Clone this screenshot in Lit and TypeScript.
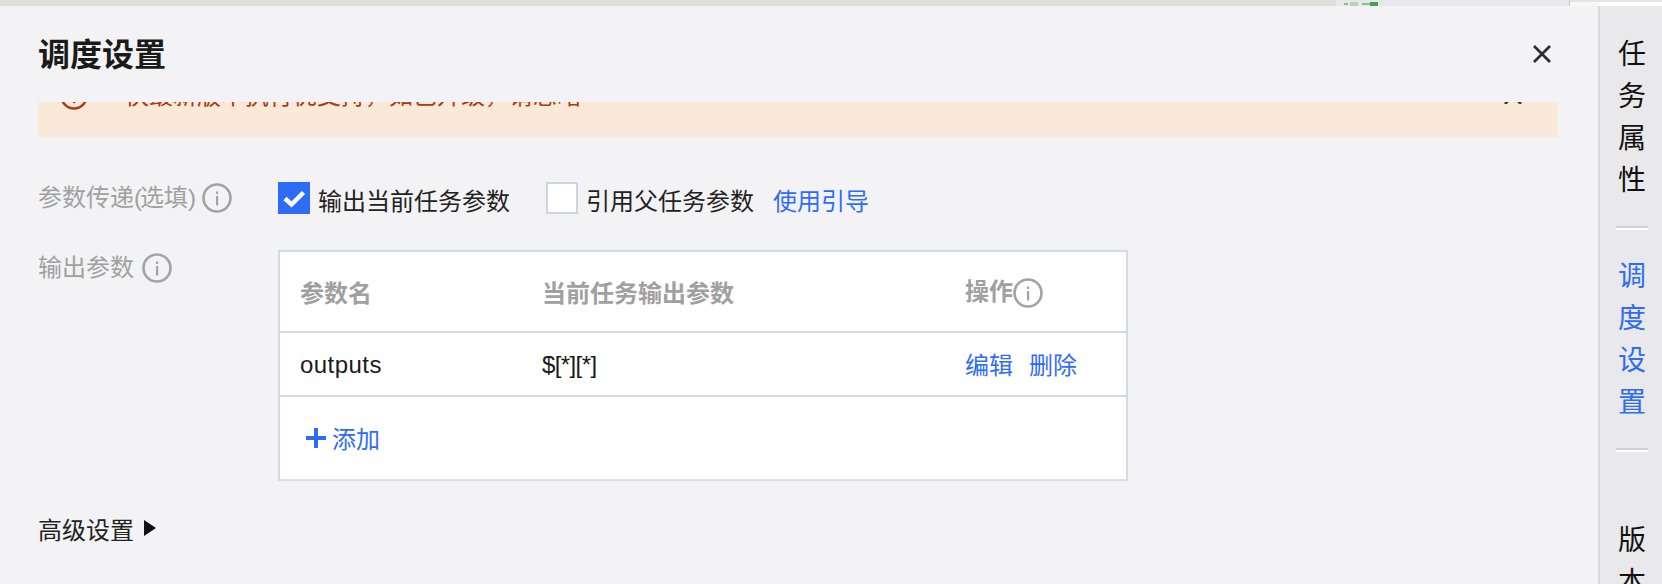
import { LitElement, html, css, svg } from "lit";
import { customElement } from "lit/decorators.js";

const info = svg`<circle cx="15" cy="15" r="13.5" fill="none" stroke="#a3a3a3" stroke-width="2.6"/><rect x="14" y="13" width="2.2" height="9.5" fill="#a3a3a3"/><rect x="14" y="8.5" width="2.2" height="2.4" fill="#a3a3a3"/>`;

@customElement("app-root")
export class AppRoot extends LitElement {
  static styles = css`
    :host {
      display: block;
      width: 1662px;
      height: 584px;
      overflow: hidden;
      background: #f3f3f5;
      font-family: "Liberation Sans", "Noto Sans CJK SC", sans-serif;
      font-size: 24px;
      color: #1a1a1a;
    }
    .strip { height: 6px; display: flex; background: #dfdfdb; }
    .strip-a { width: 1336px; }
    .strip-b { width: 234px; background: #e6e8ec; border-right: 1px solid #c4c6ca; box-sizing: border-box; overflow: hidden; }
    .strip-c { flex: 1; background: linear-gradient(90deg, #f7f7f6 28px, #fff 28px); border-top: 2px solid #e4e4e4; }
    .strip-marks { display: block; margin: 2px 0 0 8px; }
    .shell { display: flex; height: 578px; }
    .main { width: 1598px; flex: none; padding: 0 40px 0 38px; box-sizing: border-box; }
    .head { height: 96px; display: flex; align-items: center; justify-content: space-between; box-sizing: border-box; padding: 0 7px 0 0; }
    .title { font-size: 32px; font-weight: 700; line-height: 44px; margin-top: 2px; }
    .close { display: block; }
    .notice {
      height: 35px; width: 1520px; background: #fae8d8; overflow: hidden;
      color: #a93a12; line-height: 34px;
    }
    .notice-inner { display: flex; align-items: center; height: 34px; margin-top: -23px; padding-left: 22px; }
    .notice-icon { flex: none; }
    .notice-text { margin-left: 37px; flex: 1; white-space: nowrap; }
    .notice-x { flex: none; margin-right: 36px; }
    .row { display: flex; }
    .label { width: 240px; flex: none; display: flex; align-items: center; gap: 8px; color: #a0a0a0; height: 32px; }
    .label-text { margin-top: -5px; white-space: nowrap; }
    .paren { letter-spacing: -2px; }
    .params { margin-top: 45px; align-items: center; height: 32px; }
    .check { width: 32px; height: 32px; box-sizing: border-box; flex: none; }
    .check.on { background: #2f6cf6; }
    .check.off { background: #fff; border: 2px solid #cfd4df; }
    .check svg { display: block; }
    .cb-text { margin-left: 8px; margin-top: 3px; white-space: nowrap; color: #222; }
    .gap { margin-left: 36px; }
    .link { color: #2f6cf6; }
    .guide { margin-left: 19px; margin-top: 3px; }
    .out { margin-top: 36px; }
    .out .label { margin-top: 2px; }
    .table { width: 850px; height: 231px; box-sizing: border-box; background: #fff; border: 2px solid #d3d8e2; border-bottom-color: #dcdfe5; border-right-color: #d6d9e1; }
    .tr { display: grid; grid-template-columns: 242px 423px 1fr; box-sizing: border-box; padding-left: 20px; align-items: center; border-bottom: 2px solid #d3d8e2; }
    .thead { height: 81px; color: #a0a0a0; font-weight: 700; }
    .tbody { height: 64px; }
    .name { letter-spacing: 0.45px; margin-top: 2px; }
    .expr { letter-spacing: -0.6px; margin-top: 2px; }
    .th-op { display: flex; align-items: center; margin-top: -5px; }
    .th-op svg { margin-top: 8px; }
    .ops { display: flex; gap: 16px; margin-top: -1px; }
    .add { display: flex; align-items: center; height: 82px; padding-left: 26px; gap: 6px; }
    .add span { margin-top: -2px; }
    .adv { margin-top: 30px; display: flex; align-items: center; gap: 10px; color: #222; height: 34px; }
    .adv svg { margin-top: -1px; }
    .side { flex: 1; background: #e9e9eb; border-left: 2px solid #d9d9dc; box-sizing: border-box; display: flex; flex-direction: column; align-items: center; padding-top: 25px; padding-left: 2px; font-family: "Noto Sans CJK SC", sans-serif; font-size: 28px; line-height: 42px; color: #111; }
    .side-item { width: 28px; text-align: center; flex: none; }
    .side-item.active { color: #2f6cf6; }
    .sep { width: 32px; height: 4px; margin: 27px 0 23px; background: linear-gradient(#cfcfd6 50%, #fff 50%); flex: none; }
    .sep.last { margin: 27px 0 65px; }
  `;

  render() {
    return html`
      <div class="strip">
        <div class="strip-a"></div>
        <div class="strip-b">
          <svg class="strip-marks" width="40" height="4" viewBox="0 0 40 4"><rect x="0" y="1" width="4" height="2" fill="#8cbf8c"/><rect x="6" y="0" width="8" height="4" fill="#b5d6b5"/><rect x="18" y="1" width="8" height="2" fill="#8cbf8c"/><rect x="26" y="0" width="8" height="4" fill="#4c9f4c"/></svg>
        </div>
        <div class="strip-c"></div>
      </div>
      <div class="shell">
        <div class="main">
          <div class="head">
            <div class="title">调度设置</div>
            <svg class="close" width="18" height="18" viewBox="0 0 18 18"><path d="M1 1L17 17M17 1L1 17" stroke="#2b2b2b" stroke-width="2.6" fill="none"/></svg>
          </div>
          <div class="notice">
            <div class="notice-inner">
              <svg class="notice-icon" width="28" height="28" viewBox="0 0 28 28"><circle cx="14" cy="14" r="12.5" fill="none" stroke="#a93a12" stroke-width="2.4"/><rect x="13" y="7" width="2.4" height="9" fill="#a93a12"/><rect x="13" y="18.5" width="2.4" height="2.6" fill="#a93a12"/></svg>
              <div class="notice-text">快最新版本执行优支持，如已升级，请忽略</div>
              <svg class="notice-x" width="18" height="16" viewBox="0 0 18 16"><path d="M1 0L17 16M17 0L1 16" stroke="#333" stroke-width="2.6" fill="none"/></svg>
            </div>
          </div>
          <div class="row params">
            <div class="label"><span class="label-text">参数传递<span class="paren">(</span>选填<span class="paren">)</span></span><svg width="30" height="30" viewBox="0 0 30 30">${info}</svg></div>
            <div class="check on"><svg width="32" height="32" viewBox="0 0 32 32"><path d="M7 16.5L13.5 22.5L25.5 10.5" fill="none" stroke="#fff" stroke-width="4.5"/></svg></div>
            <div class="cb-text">输出当前任务参数</div>
            <div class="check off gap"></div>
            <div class="cb-text">引用父任务参数</div>
            <div class="link guide">使用引导</div>
          </div>
          <div class="row out">
            <div class="label"><span class="label-text">输出参数</span><svg width="30" height="30" viewBox="0 0 30 30">${info}</svg></div>
            <div class="table">
              <div class="tr thead">
                <div>参数名</div>
                <div>当前任务输出参数</div>
                <div class="th-op">操作<svg width="30" height="30" viewBox="0 0 30 30">${info}</svg></div>
              </div>
              <div class="tr tbody">
                <div class="name">outputs</div>
                <div class="expr">$[*][*]</div>
                <div class="ops"><span class="link">编辑</span><span class="link">删除</span></div>
              </div>
              <div class="add link">
                <svg width="20" height="20" viewBox="0 0 20 20"><path d="M10 0V20M0 10H20" stroke="#2f6cf6" stroke-width="4"/></svg>
                <span>添加</span>
              </div>
            </div>
          </div>
          <div class="adv">高级设置
            <svg width="12" height="16" viewBox="0 0 12 16"><path d="M0 0L12 8L0 16Z" fill="#111"/></svg>
          </div>
        </div>
        <div class="side">
          <div class="side-item">任务属性</div>
          <div class="sep"></div>
          <div class="side-item active">调度设置</div>
          <div class="sep last"></div>
          <div class="side-item">版本</div>
        </div>
      </div>
    `;
  }
}
